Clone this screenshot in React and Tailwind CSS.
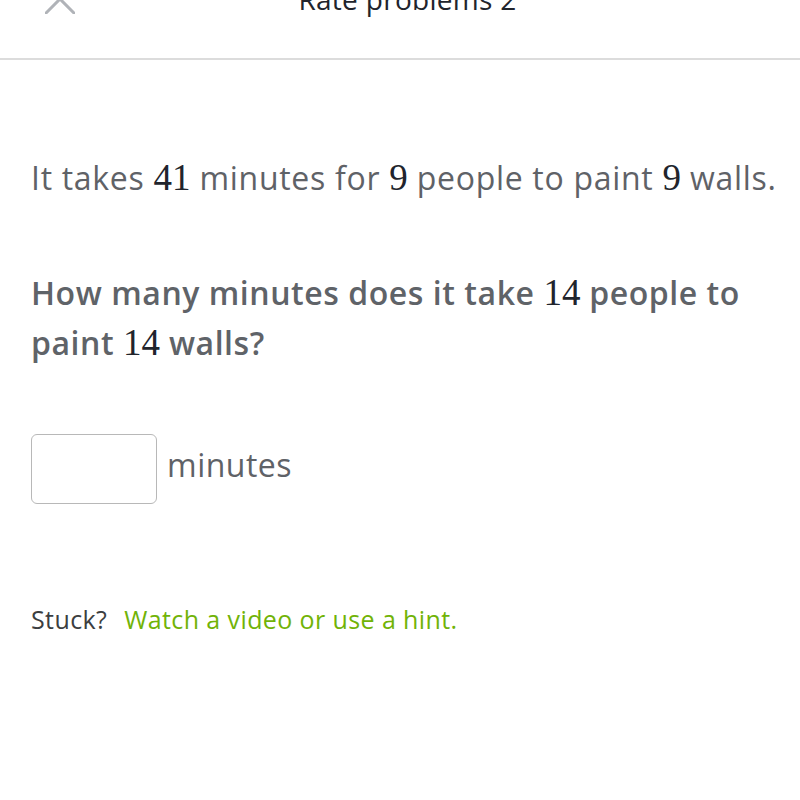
const N = ({ children }) => (
  <span className="font-['Liberation_Serif',serif] text-[37px] font-normal tracking-normal text-[#21242c]">{children}</span>
);

export default function App() {
  return (
    <div className="w-[800px] h-[800px] bg-white overflow-hidden font-['Open_Sans',sans-serif]">
      {/* Header, scrolled so only its bottom shows */}
      <div className="h-[60px] border-b-2 border-[#dcdcdc] overflow-hidden">
        <div className="-mt-[16px] flex items-center h-[30px] pl-[45px]">
          <svg width="30" height="30" viewBox="0 0 30 30" className="shrink-0">
            <path d="M1 1 L29 29 M29 1 L1 29" stroke="#b0b3b8" strokeWidth="3" strokeLinecap="round" fill="none" />
          </svg>
          <div className="flex-1 text-center pr-[60px] text-[28px] leading-[30px] tracking-[0.3px] font-medium text-[#21242c]">Rate problems 2</div>
        </div>
      </div>

      <div className="pl-[31px] pr-[4px]">
        <p className="mt-[93px] text-[32px] leading-[50px] text-[#5f6267] whitespace-nowrap tracking-[0.7px]">
          It takes <N>41</N> minutes for <N>9</N> people to paint <N>9</N> walls.
        </p>

        <p className="mt-[65px] text-[32px] leading-[50px] font-semibold text-[#5f6368] tracking-[0.55px] whitespace-nowrap">
          How many minutes does it take <N>14</N> people to
          <br />
          paint <N>14</N> walls?
        </p>

        <div className="mt-[66px] flex items-center gap-[10px]">
          <div className="w-[126px] h-[70px] rounded-[6px] border-[1.5px] border-[#b8b8b8]" />
          <span className="text-[32px] tracking-[0.5px] text-[#5f6267] -mt-[8px]">minutes</span>
        </div>

        <div className="mt-[99px] text-[25px] leading-[32px] tracking-[0.4px]">
          <span className="text-[#3b3e40]">Stuck?</span>
          <span className="ml-[17px] text-[#71b307]">Watch a video or use a hint.</span>
        </div>
      </div>
    </div>
  );
}
